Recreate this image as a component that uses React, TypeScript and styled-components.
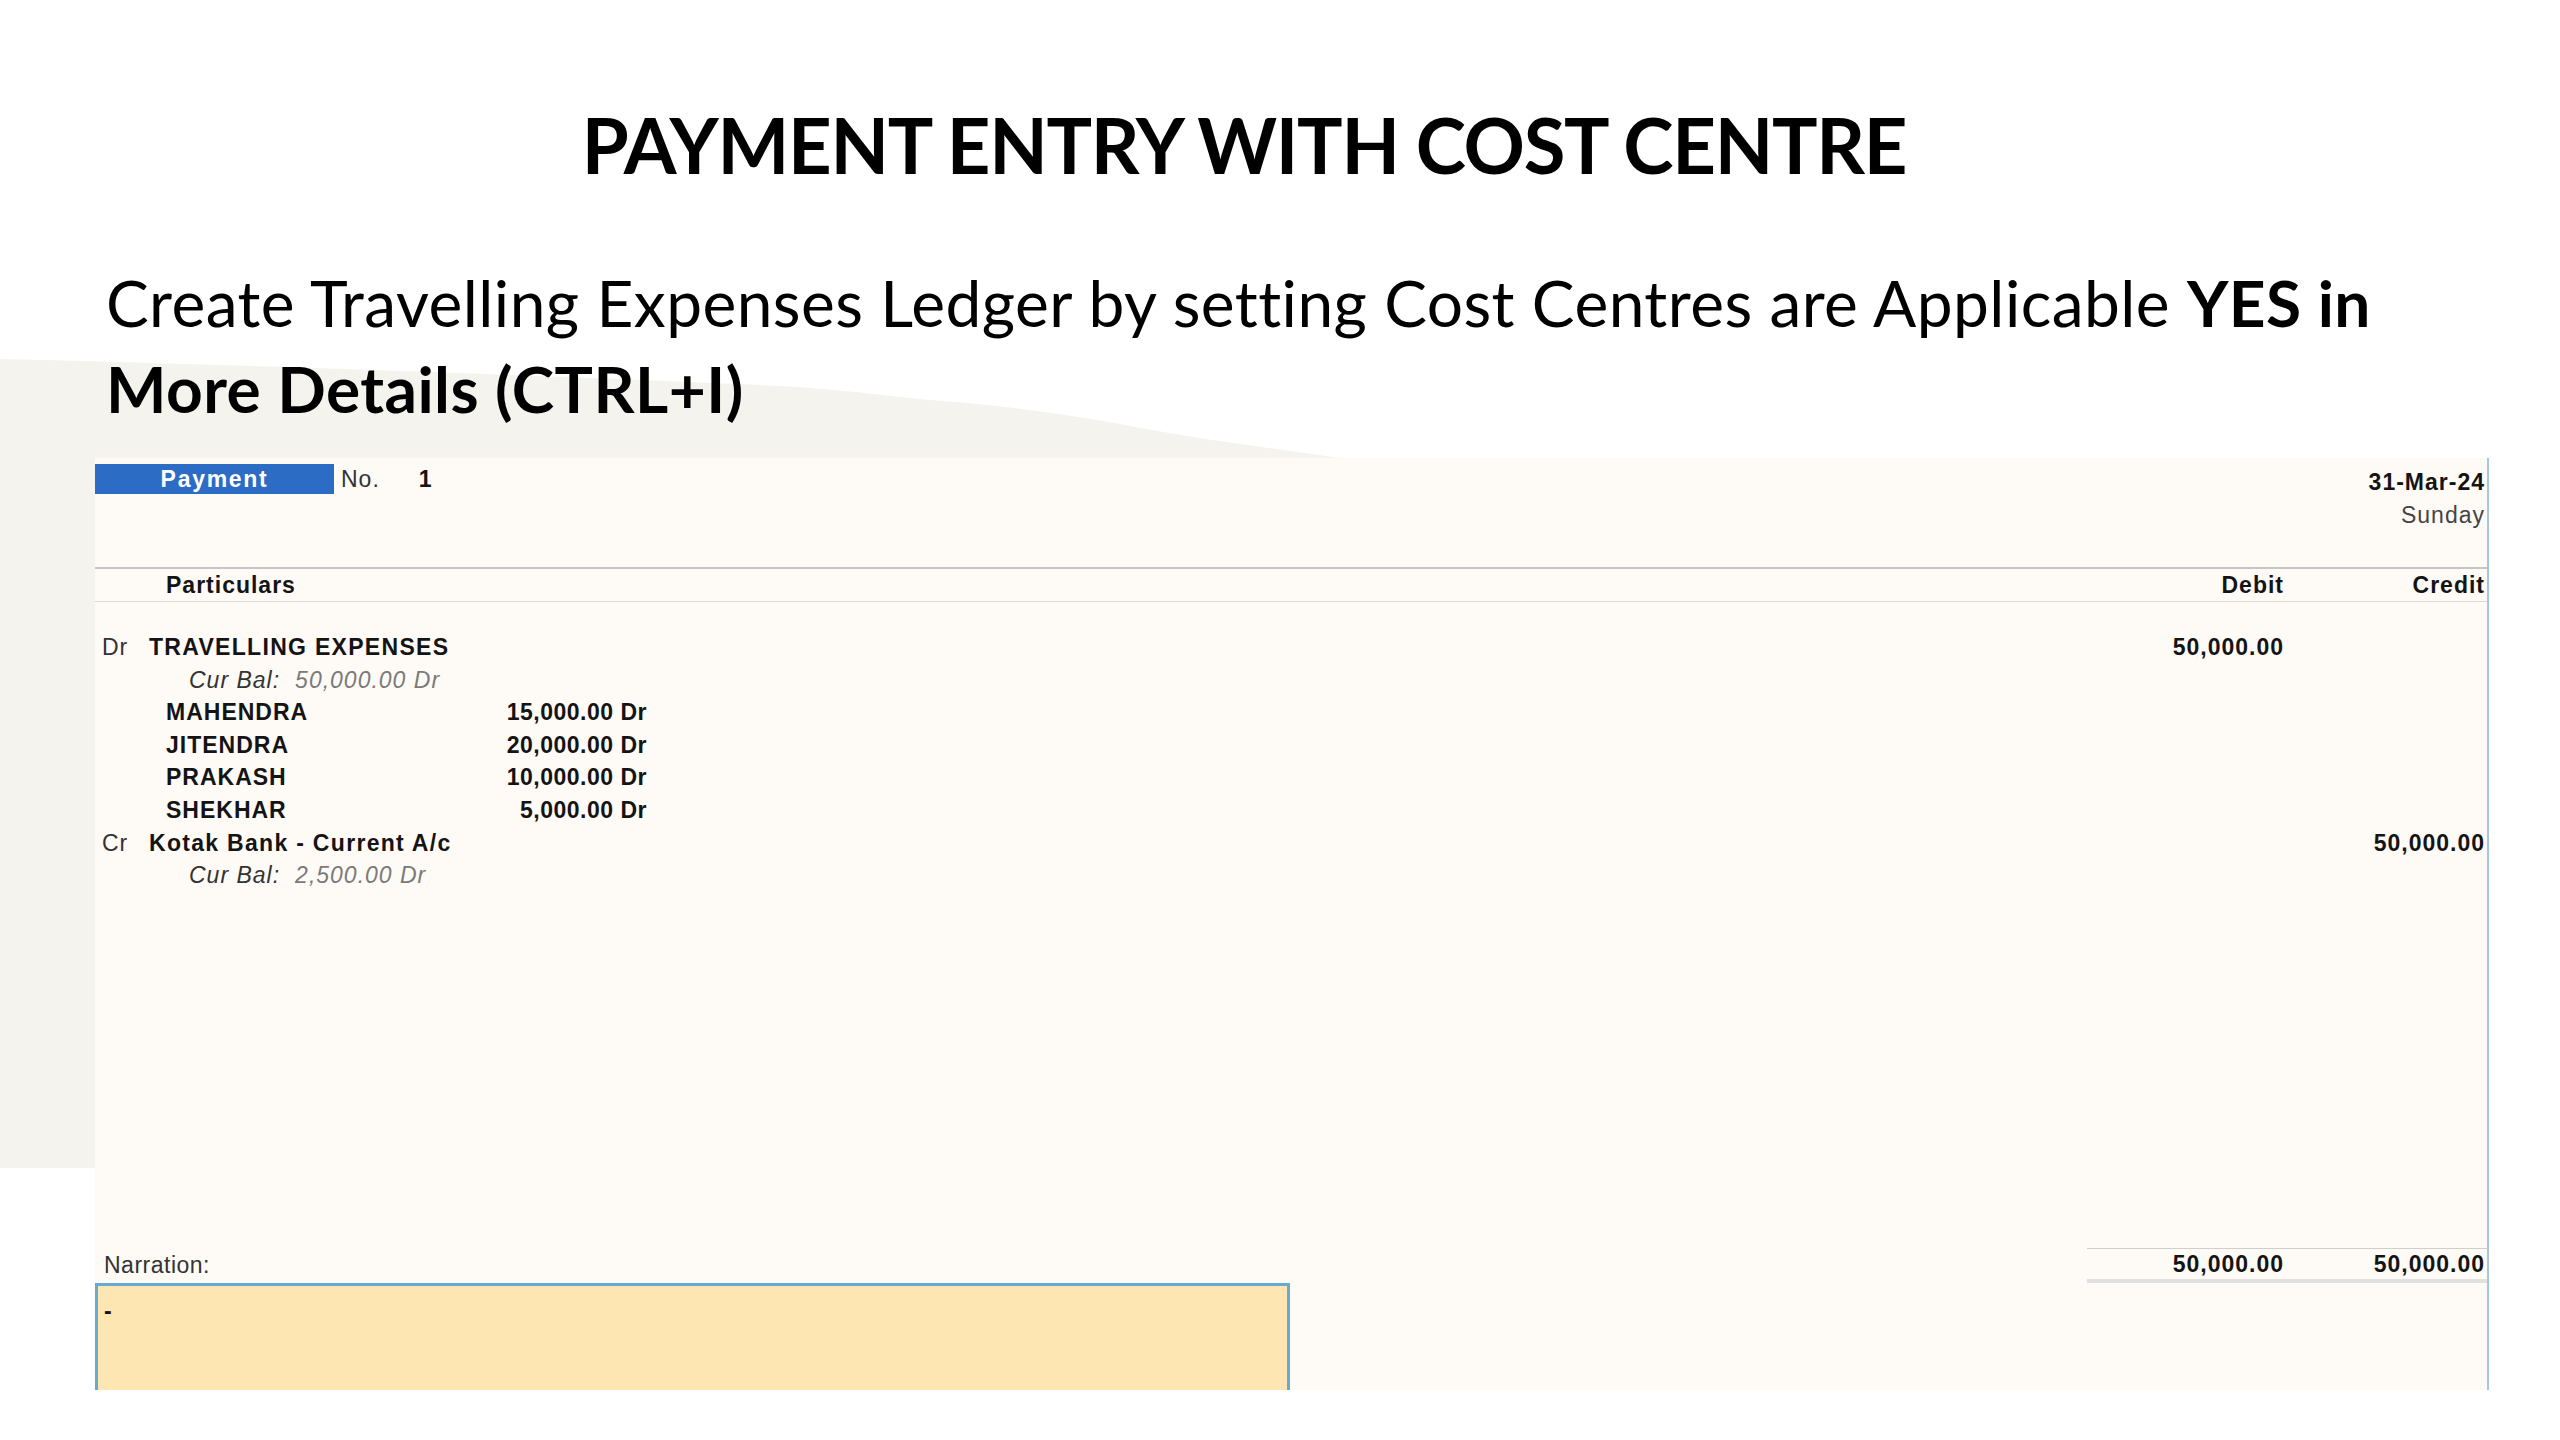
import React from 'react';
import styled, { createGlobalStyle } from 'styled-components';

const GlobalStyle = createGlobalStyle`
  html, body {
    margin: 0;
    padding: 0;
    background: #ffffff;
  }

  * {
    box-sizing: border-box;
  }
`;

const Slide = styled.div`
  position: relative;
  width: 2560px;
  height: 1440px;
  overflow: hidden;
  background: #ffffff;
  color: #000000;
  font-family: Lato, 'Open Sans', sans-serif;
`;

const Backdrop = styled.svg`
  position: absolute;
  top: 0;
  left: 0;
  width: 2560px;
  height: 1440px;
  z-index: 0;
`;

const Content = styled.div`
  position: relative;
  z-index: 1;
`;

const Heading = styled.header`
  height: 458px;
`;

const Title = styled.h1`
  margin: 0;
  padding: 100px 72px 0 0;
  text-align: center;
  font-size: 76px;
  line-height: 90px;
  font-weight: 700;
  letter-spacing: -1.3px;
`;

const Lead = styled.p`
  margin: 70px 0 0;
  padding-left: 106px;
  font-size: 64px;
  line-height: 86px;
  font-weight: 400;
  letter-spacing: 0.45px;
  white-space: nowrap;

  strong {
    font-weight: 700;
  }
`;

/* ---- voucher screen ---- */

const Panel = styled.section`
  margin-left: 95px;
  width: 2394px;
  height: 932px;
  display: flex;
  flex-direction: column;
  overflow: hidden;
  background: #fefaf6;
  border-right: 2px solid #a6c6e6;
  font-family: 'Liberation Sans', Arial, sans-serif;
  font-size: 23px;
  letter-spacing: 1px;
  color: #141414;
  white-space: nowrap;
`;

const TopBar = styled.div`
  height: 109px;
  display: flex;
  justify-content: space-between;
  align-items: flex-start;
  padding: 6px 2px 0 0;
`;

const VoucherMeta = styled.div`
  display: flex;
  align-items: center;
  height: 30px;
`;

const TypeBadge = styled.span`
  width: 239px;
  height: 30px;
  background: #2d6cc4;
  color: #ffffff;
  font-size: 23px;
  font-weight: 700;
  line-height: 30px;
  letter-spacing: 1.7px;
  text-align: center;
`;

const MetaLabel = styled.span`
  margin-left: 7px;
  color: #333333;
`;

const MetaValue = styled.span`
  margin-left: 39px;
  font-weight: 700;
`;

const DateBlock = styled.div`
  margin-top: 2px;
  display: flex;
  flex-direction: column;
  align-items: flex-end;
  line-height: 33px;
`;

const DateText = styled.span<{ $strong?: boolean }>`
  font-weight: ${({ $strong }) => ($strong ? 700 : 400)};
  color: ${({ $strong }) => ($strong ? '#141414' : '#444444')};
`;

const AmountGrid = styled.div`
  display: grid;
  grid-template-columns: 1fr 180px 201px;
  padding-right: 2px;
`;

const ColumnHeader = styled(AmountGrid)`
  height: 35px;
  border-top: 2px solid #c6c6c6;
  border-bottom: 1px solid #d8d8d8;
  line-height: 32px;
  font-weight: 700;
`;

const HeaderCell = styled.span<{ $right?: boolean }>`
  text-align: ${({ $right }) => ($right ? 'right' : 'left')};
  padding-left: ${({ $right }) => ($right ? '0' : '71px')};
`;

const Entries = styled.div`
  margin-top: 29px;
  display: flex;
  flex-direction: column;
  line-height: 32.6px;
`;

const Particular = styled.div`
  display: flex;
  padding-left: 7px;
`;

const Side = styled.span`
  width: 47px;
  color: #333333;
`;

const LedgerName = styled.span`
  font-weight: 700;
  letter-spacing: 1.3px;
`;

const Amount = styled.span`
  text-align: right;
  font-weight: 700;
`;

const BalanceRow = styled.div`
  padding-left: 94px;
  font-style: italic;
  color: #333333;
`;

const BalanceValue = styled.span`
  margin-left: 15px;
  color: #7a7a7a;
`;

const CostRow = styled.div`
  display: grid;
  grid-template-columns: 300px 181px;
  padding-left: 71px;
  font-weight: 700;
`;

const CostAmount = styled.span`
  text-align: right;
  letter-spacing: 0.5px;
`;

const Footer = styled.div`
  margin-top: auto;
`;

const TotalsRow = styled.div`
  height: 35px;
  display: flex;
  justify-content: space-between;
`;

const NarrationLabel = styled.span`
  padding-left: 9px;
  line-height: 35px;
  color: #333333;
  letter-spacing: 0.5px;
`;

const Totals = styled.div`
  width: 400px;
  display: grid;
  grid-template-columns: 1fr 201px;
  padding-right: 2px;
  border-top: 1px solid #cfcfcf;
  border-bottom: 4px solid #e1e1e1;
  line-height: 30px;
  font-weight: 700;
`;

const NarrationBox = styled.div`
  width: 1195px;
  height: 107px;
  padding: 9px 0 0 6px;
  background: #fde6b1;
  border: 3px solid #66abcf;
  border-bottom: none;
  line-height: 32px;
  font-weight: 700;
`;

type Entry =
  | { kind: 'ledger'; side: 'Dr' | 'Cr'; name: string; debit?: string; credit?: string }
  | { kind: 'balance'; value: string }
  | { kind: 'cost'; name: string; amount: string };

const entries: Entry[] = [
  { kind: 'ledger', side: 'Dr', name: 'TRAVELLING EXPENSES', debit: '50,000.00' },
  { kind: 'balance', value: '50,000.00 Dr' },
  { kind: 'cost', name: 'MAHENDRA', amount: '15,000.00 Dr' },
  { kind: 'cost', name: 'JITENDRA', amount: '20,000.00 Dr' },
  { kind: 'cost', name: 'PRAKASH', amount: '10,000.00 Dr' },
  { kind: 'cost', name: 'SHEKHAR', amount: '5,000.00 Dr' },
  { kind: 'ledger', side: 'Cr', name: 'Kotak Bank - Current A/c', credit: '50,000.00' },
  { kind: 'balance', value: '2,500.00 Dr' },
];

const renderEntry = (entry: Entry, i: number) => {
  if (entry.kind === 'ledger') {
    return (
      <AmountGrid key={i}>
        <Particular>
          <Side>{entry.side}</Side>
          <LedgerName>{entry.name}</LedgerName>
        </Particular>
        <Amount>{entry.debit}</Amount>
        <Amount>{entry.credit}</Amount>
      </AmountGrid>
    );
  }
  if (entry.kind === 'balance') {
    return (
      <BalanceRow key={i}>
        Cur Bal:<BalanceValue>{entry.value}</BalanceValue>
      </BalanceRow>
    );
  }
  return (
    <CostRow key={i}>
      <span>{entry.name}</span>
      <CostAmount>{entry.amount}</CostAmount>
    </CostRow>
  );
};

const App: React.FC = () => {
  return (
    <>
      <GlobalStyle />
      <Slide>
        <Backdrop viewBox="0 0 2560 1440" aria-hidden="true">
          <path
            d="M0,359 C300,366 600,378 780,386 C850,390 885,396 930,400 C1000,405 1060,413 1120,424 C1200,440 1300,452 1370,462 L1370,1168 L0,1168 Z"
            fill="#f4f3ed"
          />
        </Backdrop>
        <Content>
          <Heading>
            <Title>PAYMENT ENTRY WITH COST CENTRE</Title>
            <Lead>
              Create Travelling Expenses Ledger by setting Cost Centres are Applicable{' '}
              <strong>
                YES in
                <br />
                More Details (CTRL+I)
              </strong>
            </Lead>
          </Heading>

          <Panel>
            <TopBar>
              <VoucherMeta>
                <TypeBadge>Payment</TypeBadge>
                <MetaLabel>No.</MetaLabel>
                <MetaValue>1</MetaValue>
              </VoucherMeta>
              <DateBlock>
                <DateText $strong>31-Mar-24</DateText>
                <DateText>Sunday</DateText>
              </DateBlock>
            </TopBar>

            <ColumnHeader>
              <HeaderCell>Particulars</HeaderCell>
              <HeaderCell $right>Debit</HeaderCell>
              <HeaderCell $right>Credit</HeaderCell>
            </ColumnHeader>

            <Entries>{entries.map(renderEntry)}</Entries>

            <Footer>
              <TotalsRow>
                <NarrationLabel>Narration:</NarrationLabel>
                <Totals>
                  <Amount>50,000.00</Amount>
                  <Amount>50,000.00</Amount>
                </Totals>
              </TotalsRow>
              <NarrationBox>-</NarrationBox>
            </Footer>
          </Panel>
        </Content>
      </Slide>
    </>
  );
};

export default App;
